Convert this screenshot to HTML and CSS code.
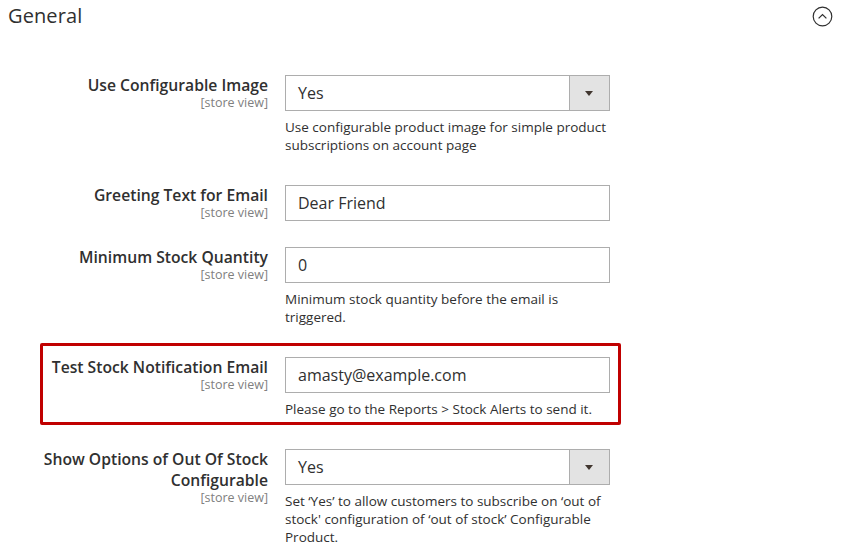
FILE: index.html
```html
<!DOCTYPE html>
<html>
<head>
<meta charset="utf-8">
<link rel="stylesheet" href="styles.css">
</head>
<body>
<div class="section-head">
  <h2 class="section-title">General</h2>
  <svg class="collapse-icon" width="21" height="21" viewBox="0 0 21 21">
    <circle cx="10.5" cy="10.5" r="9.3" fill="none" stroke="#303030" stroke-width="1.2"/>
    <path d="M6.6 12.4 L10.5 8.6 L14.4 12.4" fill="none" stroke="#303030" stroke-width="1.3"/>
  </svg>
</div>
<div class="fields">
  <div class="field">
    <div class="label"><span class="label-text">Use Configurable Image</span><span class="scope">[store view]</span></div>
    <div class="control">
      <div class="select"><span class="value">Yes</span><span class="arrow"></span></div>
      <div class="note">Use configurable product image for simple product subscriptions on account page</div>
    </div>
  </div>
  <div class="field">
    <div class="label"><span class="label-text">Greeting Text for Email</span><span class="scope">[store view]</span></div>
    <div class="control">
      <div class="input">Dear Friend</div>
    </div>
  </div>
  <div class="field">
    <div class="label"><span class="label-text">Minimum Stock Quantity</span><span class="scope">[store view]</span></div>
    <div class="control">
      <div class="input">0</div>
      <div class="note">Minimum stock quantity before the email is triggered.</div>
    </div>
  </div>
  <div class="field highlighted">
    <div class="label"><span class="label-text">Test Stock Notification Email</span><span class="scope">[store view]</span></div>
    <div class="control">
      <div class="input">amasty@example.com</div>
      <div class="note">Please go to the Reports &gt; Stock Alerts to send it.</div>
    </div>
  </div>
  <div class="field">
    <div class="label"><span class="label-text">Show Options of Out Of Stock Configurable</span><span class="scope">[store view]</span></div>
    <div class="control">
      <div class="select"><span class="value">Yes</span><span class="arrow"></span></div>
      <div class="note">Set ‘Yes’ to allow customers to subscribe on ‘out of stock' configuration of ‘out of stock’ Configurable Product.</div>
    </div>
  </div>
</div>
</body>
</html>
```
FILE: styles.css
```css
html, body {
  margin: 0;
  padding: 0;
  background: #ffffff;
}
body {
  font-family: "Open Sans", "Noto Sans", sans-serif;
  color: #303030;
  width: 841px;
  height: 550px;
  overflow: hidden;
}
.section-head {
  display: flex;
  justify-content: space-between;
  align-items: center;
  padding: 2px 8px 0 8px;
  height: 30px;
}
.section-title {
  margin: 0;
  font-size: 20px;
  font-weight: 400;
  color: #303030;
  letter-spacing: 0.1px;
  margin-top: -4px;
}
.collapse-icon {
  display: block;
  margin-top: -2px;
}
.fields {
  padding-top: 43px;
}
.field {
  display: flex;
  align-items: flex-start;
  margin-bottom: 26px;
  position: relative;
}
.label {
  width: 260px;
  padding-left: 8px;
  box-sizing: content-box;
  text-align: right;
  display: flex;
  flex-direction: column;
  align-items: flex-end;
}
.label-text {
  font-size: 15.7px;
  font-weight: 600;
  line-height: 21px;
  color: #303030;
}
.scope {
  font-size: 12.5px;
  line-height: 13px;
  color: #808080;
  margin-top: 0;
}
.control {
  margin-left: 17px;
  width: 325px;
}
.input, .select {
  height: 36px;
  box-sizing: border-box;
  border: 1px solid #adadad;
  background: #fff;
  font-size: 16px;
  line-height: 34px;
  padding-left: 12px;
  color: #303030;
}
.select {
  display: flex;
  justify-content: space-between;
}
.arrow {
  width: 39px;
  height: 34px;
  background: #e3e3e3;
  border-left: 1px solid #adadad;
  position: relative;
}
.arrow::after {
  content: "";
  position: absolute;
  left: 15px;
  top: 15px;
  border-left: 4.5px solid transparent;
  border-right: 4.5px solid transparent;
  border-top: 5px solid #41362f;
}
.note {
  margin-top: 7px;
  font-size: 13.5px;
  line-height: 18px;
  padding-bottom: 5px;
  color: #303030;
  width: 330px;
}
.highlighted::before {
  content: "";
  position: absolute;
  left: 40px;
  top: -14px;
  width: 581px;
  height: 82px;
  box-sizing: border-box;
  border: 3px solid #c00000;
  border-radius: 2px;
  pointer-events: none;
}
```
